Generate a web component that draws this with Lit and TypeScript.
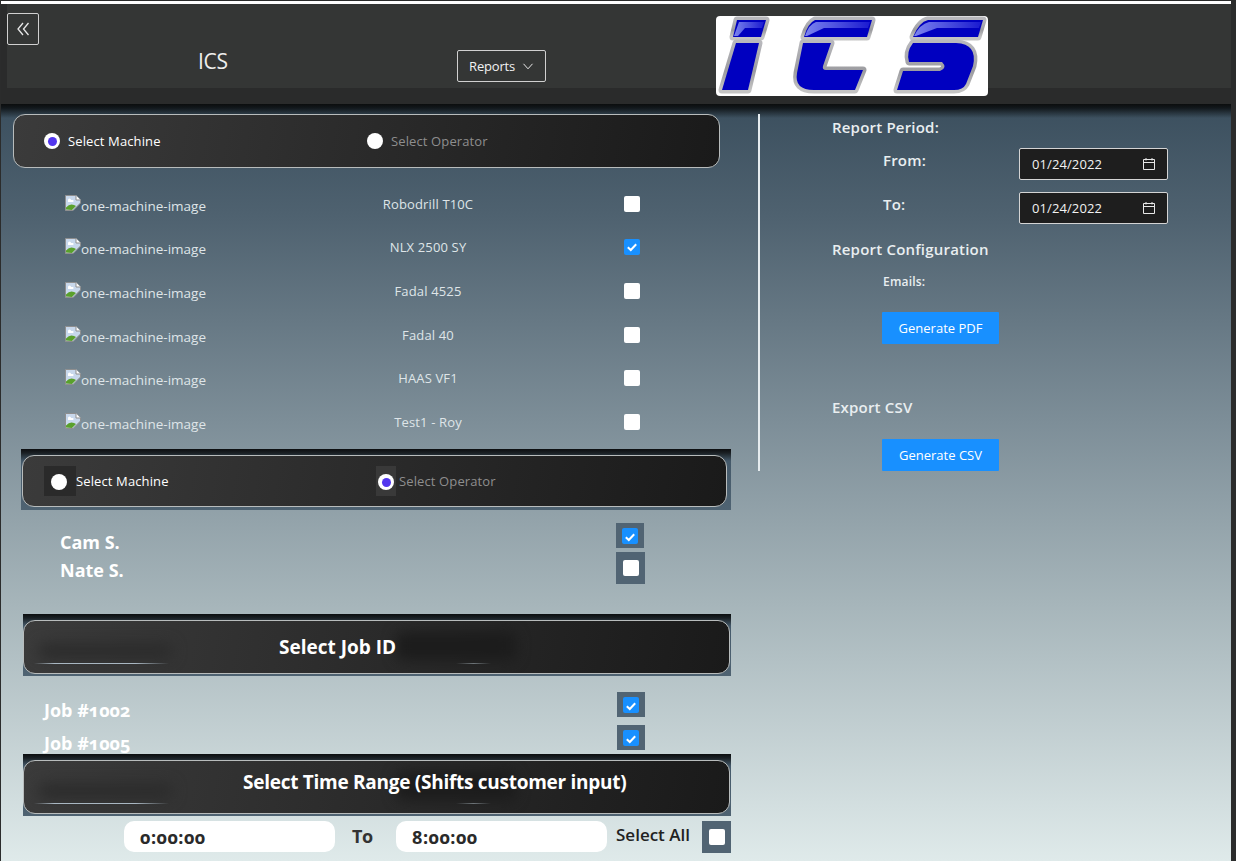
import { LitElement, html, css, svg } from "lit";
import { customElement } from "lit/decorators.js";

const brokenImage = html`<svg class="broken" viewBox="0 0 16 16" width="16" height="16">
  <path d="M0.5 0.5H11L15.5 5V8L8 15.5H0.5Z" fill="#c8d8ec" stroke="#8f8f8f"/>
  <path d="M11 0.5V5H15.5" fill="#fff" stroke="#8f8f8f"/>
  <path d="M3 5a1.5 1.5 0 0 1 3 0h2a1.2 1.2 0 0 1 0 2H3Z" fill="#fff"/>
  <path d="M1 14.5V12.5Q5 8 9 10L11 11L7 15Z" fill="#5aa02c"/>
</svg>`;

const check = html`<svg viewBox="0 0 16 16" width="16" height="16"><path d="M3.8 8.2L6.8 11L12.2 5.3" fill="none" stroke="#fff" stroke-width="2"/></svg>`;

const calendar = html`<svg class="cal" viewBox="0 0 14 14" width="14" height="14"><path d="M1.5 2.5H12.5V12.5H1.5ZM1.5 5.5H12.5M4 1V3.5M10 1V3.5" fill="none" stroke="#e8e8e8" stroke-width="1"/></svg>`;

const logoPieces = svg`
  <path d="M21 4H50L45 21H17Z"/>
  <path d="M20 27H43L32 74H6Z"/>
  <path d="M99 4H156L151 21H88Q92 7 99 4Z"/>
  <path d="M87 27H115L107 50Q106 54 110 54H147L139 74H98Q78 74 81 57Z"/>
  <path d="M212 4H267L262 21H197Q203 6 212 4Z"/>
  <path d="M197 27H240Q262 28 257 50L250 68Q247 74 238 74H181L187 55H224Q232 52 226 46H193Q190 36 197 27Z"/>
`;

const logo = html`<svg class="logo" viewBox="0 0 272 80" width="272" height="80">
  <defs>
    <linearGradient id="gleam" x1="0" y1="0" x2="1" y2="0">
      <stop offset="0" stop-color="#7c84ee"/><stop offset="1" stop-color="#1a1ad0"/>
    </linearGradient>
    <linearGradient id="edge" x1="0" y1="0" x2="0" y2="1">
      <stop offset="0" stop-color="#b8b8bc"/><stop offset="0.6" stop-color="#9c9ca0"/><stop offset="1" stop-color="#c4c4c4"/>
    </linearGradient>
  </defs>
  <rect width="272" height="80" fill="#fff"/>
  <g fill="#0000c0" stroke="url(#edge)" stroke-width="7" stroke-linejoin="round" paint-order="stroke">${logoPieces}</g>
  <path d="M23 6H48L46 12H29L22 20H18Z" fill="url(#gleam)"/>
  <path d="M100 6H154L152 12H108L91 20H89Q93 8 100 6Z" fill="url(#gleam)"/>
  <path d="M213 6H265L263 12H221L200 20H198Q204 8 213 6Z" fill="url(#gleam)"/>
</svg>`;

const machines = [
  ["Robodrill T10C", false],
  ["NLX 2500 SY", true],
  ["Fadal 4525", false],
  ["Fadal 40", false],
  ["HAAS VF1", false],
  ["Test1 - Roy", false],
] as const;

@customElement("app-root")
export class AppRoot extends LitElement {
  static styles = css`
    :host {
      display: block;
      width: 1236px;
      height: 861px;
      overflow: hidden;
      font-family: "Open Sans", "Noto Sans", sans-serif;
      color: #fff;
    }
    * { box-sizing: border-box; }
    .page {
      width: 1236px;
      height: 861px;
      display: flex;
      flex-direction: column;
      background: #2b2c2c;
      border-top: 1px solid #2b2c2c;
      padding-right: 5px;
      padding-left: 1px;
    }
    .topline { height: 3px; background: #fff; flex: none; }
    .header {
      flex: none;
      height: 100px;
      padding: 0 0 16px 6px;
      background: #2a2b2b;
      position: relative;
    }
    .header-in {
      height: 84px;
      background: #343635;
      display: grid;
      grid-template-columns: 191px 259px 259px auto;
    }
    .back {
      width: 32px; height: 32px; margin-top: 9px;
      border: 1px solid #d0d0d0; border-radius: 2px;
      display: flex; align-items: center; justify-content: center;
    }
    .hleft { display: flex; }
    .ics { font-size: 21px; font-weight: 500; margin-top: 43px; line-height: 28px; color: #eee; letter-spacing: -0.3px; }
    .reports {
      width: 89px; height: 32px; margin-top: 46px;
      border: 1px solid #d0d0d0; border-radius: 2px;
      display: flex; align-items: center; justify-content: center; gap: 7px;
      font-size: 13px; color: #f2f2f2; letter-spacing: -0.2px;
    }
    .logo { display: block; border-radius: 4px; margin-top: 12px; }
    .main {
      flex: 1;
      min-height: 0;
      display: flex;
      background:
        linear-gradient(to bottom, #0b0d0e 0, #12181c 4px, rgba(18,24,28,0) 14px),
        linear-gradient(to bottom, #3b4f5e 0%, #4f6270 15%, #7d8e98 42%, #a6b5ba 66%, #dfeaea 100%);
    }
    .left { width: 757px; flex: none; padding: 10px 0 0 12px; display: flex; flex-direction: column; }
    .divider { width: 2px; height: 357px; margin-top: 10px; background: #e6ecef; flex: none; }
    .right { flex: 1; padding: 13px 0 0 72px; display: flex; flex-direction: column; }

    .panel {
      border: 1px solid #b8bcbc;
      border-radius: 12px;
      background: linear-gradient(100deg, #3b3b3b 0%, #2c2c2c 45%, #1a1a1a 100%);
      position: relative;
      overflow: hidden;
    }
    .choose { width: 707px; height: 54px; display: flex; align-items: center; font-size: 13px; letter-spacing: 0.12px; }
    .opt { display: flex; align-items: center; }
    .lbl { color: #fff; }
    .lbl.dim { color: #8e8e8e; }
    .radio {
      width: 16px; height: 16px; border-radius: 50%; background: #fff;
      display: flex; align-items: center; justify-content: center; flex: none;
    }
    .radio.on::after { content: ""; width: 9px; height: 9px; border-radius: 50%; background: #5236ee; }

    .first .o1 { margin-left: 30px; width: 323px; gap: 8px; }
    .first .o2 { gap: 8px; }

    .machines { display: flex; flex-direction: column; padding: 14px 0 0 0; height: 281px; }
    .mrow { height: 43.6px; display: grid; grid-template-columns: 52px 235px 256px 68px 16px; align-items: center; font-size: 13px; letter-spacing: 0.15px; color: #dfe5e8; }
    .alt { grid-column: 2; display: flex; align-items: center; position: relative; top: 2px; font-size: 13.5px; letter-spacing: 0; white-space: nowrap; }
    .broken { margin-bottom: 6px; flex: none; }
    .mname { grid-column: 3; text-align: center; }
    .cb { width: 16px; height: 16px; border-radius: 2px; background: #fff; flex: none; display: block; }
    .cb.on { background: #1890ff; }
    .mrow .cb { grid-column: 5; }

    .band {
      background: linear-gradient(to bottom, #0c0e10 0, #1a2024 4px, #44596a 12px, #4f6372 100%);
      flex: none;
    }
    .b2 { margin-left: 8px; width: 710px; height: 61px; padding: 6px 4px 3px 1px; }
    .b2 .panel { height: 52px; width: 705px; }
    .b2 .choose { width: 100%; height: 100%; }
    .sq { height: 30px; background: #2a2a2a; display: flex; align-items: center; flex: none; }
    .b2 .s1 { width: 32px; margin-left: 21px; padding: 2px 0 0 7px; }
    .b2 .s2 { width: 20px; padding: 2px 0 0 2px; background: #393939; }
    .b2 .l1 { width: 300px; }
    .b2 .l2 { margin-left: 3px; }

    .ops { height: 104px; display: grid; grid-template-columns: 594px 30px; grid-template-rows: 25px 36px; padding: 13px 0 0 9px; align-content: start; }
    .bold { font-weight: 700; font-size: 18px; line-height: 28px; color: #fff; font-variant-numeric: oldstyle-nums; white-space: nowrap; }
    .name { padding-left: 38px; margin-top: 5px; }
    .wrap { background: #516473; display: flex; align-items: center; justify-content: center; }
    .w1 { height: 25px; width: 28px; }
    .w2 { height: 32px; width: 29px; margin-top: 4px; }
    .name.nate { margin-top: 8px; }

    .bar { margin-left: 10px; width: 708px; height: 62px; padding: 6px 1px 2px 0; }
    .bar .panel { width: 707px; height: 54px; display: flex; align-items: center; }
    .title { position: relative; font-size: 19px; font-weight: 700; z-index: 1; white-space: nowrap; }
    .t-job { margin-left: 255px; }
    .t-time { margin-left: 219px; letter-spacing: -0.27px; margin-bottom: 10px; }
    .smudge { position: absolute; border-radius: 8px; filter: blur(7px); }
    .s-a { left: 14px; top: 22px; width: 135px; height: 16px; background: #2c2c2c; }
    .s-b { left: 372px; top: 11px; width: 120px; height: 28px; background: #1c1c1c; }
    .rule { position: absolute; left: 10px; top: 42px; width: 135px; height: 1px; background: linear-gradient(to right, transparent, #a9b7c2 15%, #a9b7c2 75%, transparent); }
    .rule2 { position: absolute; left: 432px; top: 42px; width: 35px; height: 1px; background: linear-gradient(to right, transparent, #6d7478 50%, transparent); }

    .jobs { height: 78px; margin-left: 10px; display: grid; grid-template-columns: 594px 28px; grid-template-rows: 25px 33px; overflow: hidden; padding-top: 16px; align-content: start; }
    .job { padding-left: 21px; margin-top: 4px; }
    .jw { height: 25px; width: 28px; }
    .j2 { margin-top: 8px; }
    .job.job2 { margin-top: 12px; }

    .time { margin-left: 10px; display: flex; align-items: flex-start; padding-top: 5px; width: 708px; }
    .tin {
      width: 211px; height: 31px; background: #fff; border-radius: 10px;
      color: #2a2a2a; font-weight: 700; font-size: 18px; letter-spacing: 0.5px; display: flex; align-items: center; padding-left: 16px;
      font-variant-numeric: oldstyle-nums; flex: none;
    }
    .t1 { margin-left: 101px; }
    .to { width: 61px; padding-left: 17px; color: #333; font-weight: 700; font-size: 18px; line-height: 31px; flex: none; letter-spacing: -0.3px; }
    .sa { margin-left: 9px; width: 86px; color: #222; font-weight: 600; font-size: 17px; line-height: 28px; flex: none; white-space: nowrap; }
    .w3 { width: 29px; height: 32px; }

    .h { font-weight: 600; font-size: 15px; letter-spacing: 0.2px; color: #e9eef0; line-height: 20px; }
    .drow { display: grid; grid-template-columns: 51px 136px 149px; height: 32px; margin-top: 11px; }
    .drow + .drow { margin-top: 12px; }
    .dlabel { grid-column: 2; margin-top: 2px; }
    .date {
      width: 149px; height: 32px; background: #1e1e1e; border: 1px solid #d4d4d4; border-radius: 2px;
      display: flex; align-items: center; justify-content: space-between; padding: 0 11px 0 12px;
      font-size: 13px; color: #f2f2f2; letter-spacing: 0.1px;
    }
    .cal { flex: none; }
    .config { margin-top: 15px; }
    .emails { font-size: 12px; padding-left: 51px; margin-top: 13px; }
    .export { margin-top: 53px; }
    .btn {
      margin-left: 50px; width: 117px; height: 32px; background: #1890ff; border-radius: 1px; margin-top: 20px;
      display: flex; align-items: center; justify-content: center; font-size: 13px; color: #fff; letter-spacing: 0; flex: none;
    }
    .export + .btn { margin-top: 22px; }
  `;

  private radio(on: boolean) {
    return html`<span class="radio ${on ? "on" : ""}"></span>`;
  }

  private box(on: boolean) {
    return html`<span class="cb ${on ? "on" : ""}">${on ? check : ""}</span>`;
  }

  render() {
    return html`
      <div class="page">
        <div class="topline"></div>
        <div class="header">
          <div class="header-in">
            <div class="hleft">
              <div class="back">
                <svg viewBox="0 0 16 16" width="16" height="16"><path d="M8 2L3 8L8 14M13.5 2L8.5 8L13.5 14" fill="none" stroke="#e8e8e8" stroke-width="1.3"/></svg>
              </div>
            </div>
            <div class="ics">ICS</div>
            <div class="reports">
              <span>Reports</span>
              <svg viewBox="0 0 12 12" width="12" height="12"><path d="M1.5 3.8L6 8.8L10.5 3.8" fill="none" stroke="#e8e8e8" stroke-width="1"/></svg>
            </div>
            ${logo}
          </div>
        </div>
        <div class="main">
          <div class="left">
            <div class="panel choose first">
              <div class="opt o1">${this.radio(true)}<span class="lbl">Select Machine</span></div>
              <div class="opt o2">${this.radio(false)}<span class="lbl dim">Select Operator</span></div>
            </div>
            <div class="machines">
              ${machines.map(
                ([name, on]) => html`<div class="mrow">
                  <span class="alt">${brokenImage}<span>one-machine-image</span></span>
                  <span class="mname">${name}</span>
                  ${this.box(on)}
                </div>`
              )}
            </div>
            <div class="band b2">
              <div class="panel choose">
                <div class="sq s1">${this.radio(false)}</div>
                <span class="lbl l1">Select Machine</span>
                <div class="sq s2">${this.radio(true)}</div>
                <span class="lbl dim l2">Select Operator</span>
              </div>
            </div>
            <div class="ops">
              <span class="bold name">Cam S.</span>
              <span class="wrap w1">${this.box(true)}</span>
              <span class="bold name nate">Nate S.</span>
              <span class="wrap w2">${this.box(false)}</span>
            </div>
            <div class="band bar">
              <div class="panel">
                <span class="smudge s-a"></span><span class="smudge s-b"></span><span class="rule"></span><span class="rule2"></span>
                <span class="title t-job">Select Job ID</span>
              </div>
            </div>
            <div class="jobs">
              <span class="bold job">Job #1002</span>
              <span class="wrap jw">${this.box(true)}</span>
              <span class="bold job job2">Job #1005</span>
              <span class="wrap jw j2">${this.box(true)}</span>
            </div>
            <div class="band bar">
              <div class="panel">
                <span class="smudge s-a"></span><span class="smudge s-b"></span><span class="rule"></span><span class="rule2"></span>
                <span class="title t-time">Select Time Range (Shifts customer input)</span>
              </div>
            </div>
            <div class="time">
              <span class="tin t1">0:00:00</span>
              <span class="to">To</span>
              <span class="tin">8:00:00</span>
              <span class="sa">Select All</span>
              <span class="wrap w3">${this.box(false)}</span>
            </div>
          </div>
          <div class="divider"></div>
          <div class="right">
            <div class="h">Report Period:</div>
            <div class="drow"><span class="h dlabel">From:</span><span class="date">01/24/2022 ${calendar}</span></div>
            <div class="drow"><span class="h dlabel">To:</span><span class="date">01/24/2022 ${calendar}</span></div>
            <div class="h config">Report Configuration</div>
            <div class="h emails">Emails:</div>
            <div class="btn">Generate PDF</div>
            <div class="h export">Export CSV</div>
            <div class="btn">Generate CSV</div>
          </div>
        </div>
      </div>
    `;
  }
}
